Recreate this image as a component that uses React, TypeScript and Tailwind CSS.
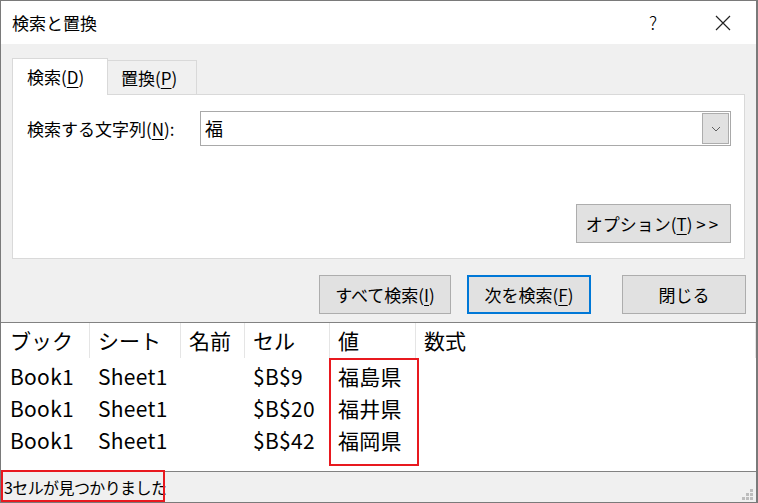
import React from "react";

const font = { fontFamily: '"Noto Sans CJK JP", "Noto Sans", sans-serif' };

function U({ children }: { children: React.ReactNode }) {
  return <span className="underline underline-offset-[3px] decoration-1">{children}</span>;
}

function Chevron() {
  return (
    <svg width="10" height="6" viewBox="0 0 10 6" fill="none">
      <path d="M1 1l4 4 4-4" stroke="#606060" strokeWidth="1" />
    </svg>
  );
}

function Grip() {
  return (
    <svg width="12" height="12" viewBox="0 0 12 12" fill="#bdbdbd">
      <rect x="8" y="0" width="3" height="3" />
      <rect x="4" y="4" width="3" height="3" />
      <rect x="8" y="4" width="3" height="3" />
      <rect x="0" y="8" width="3" height="3" />
      <rect x="4" y="8" width="3" height="3" />
      <rect x="8" y="8" width="3" height="3" />
    </svg>
  );
}

const cols = [
  { title: "ブック", w: "w-[88px]" },
  { title: "シート", w: "w-[91px]" },
  { title: "名前", w: "w-[64px]" },
  { title: "セル", w: "w-[85px]" },
  { title: "値", w: "w-[86px]" },
  { title: "数式", w: "flex-1" },
];

const rows = [
  ["Book1", "Sheet1", "", "$B$9", "福島県", ""],
  ["Book1", "Sheet1", "", "$B$20", "福井県", ""],
  ["Book1", "Sheet1", "", "$B$42", "福岡県", ""],
];

export default function App() {
  return (
    <div
      style={font}
      className="w-[758px] h-[503px] flex flex-col border-l border-r-2 border-t border-b border-[#7a7a7a] text-black overflow-hidden relative"
    >
      {/* title bar */}
      <div className="h-[43px] bg-white flex items-center shrink-0">
        <span className="pl-[11px] text-[17px] flex-1">検索と置換</span>
        <span className="w-[46px] text-center text-[18px] font-light">?</span>
        <span className="w-[24px]" />
        <span className="w-[46px] flex justify-center">
          <svg width="16" height="16" viewBox="0 0 16 16">
            <path d="M1 1l14 14M15 1L1 15" stroke="#222" strokeWidth="1.2" />
          </svg>
        </span>
        <span className="w-[10px]" />
      </div>

      {/* body */}
      <div className="bg-[#f0f0f0] flex flex-col px-[11px] pt-[13px] shrink-0">
        <div className="flex items-end h-[37px]">
          <div className="w-[96px] h-[37px] bg-white border border-b-0 border-[#d9d9d9] flex items-center pl-[14px] text-[17px] relative top-[1px]">
            検索(<U>D</U>)
          </div>
          <div className="w-[89px] h-[34px] bg-[#f0f0f0] border border-l-0 border-b-0 border-[#d9d9d9] flex items-center pl-[13px] text-[17px]">
            置換(<U>P</U>)
          </div>
        </div>
        <div className="h-[165px] bg-white border border-[#d9d9d9] flex flex-col pl-[14px] pr-[13px] pt-[16px] pb-[15px]">
          <div className="flex items-center">
            <span className="w-[173px] text-[17px]">
              検索する文字列(<U>N</U>):
            </span>
            <div className="flex-1 h-[35px] border border-[#a9a9a9] flex items-center pl-[4px] pr-[1px]">
              <span className="flex-1 text-[18px]">福</span>
              <span className="w-[27px] h-[31px] bg-[#e1e1e1] border border-[#adadad] flex items-center justify-center">
                <Chevron />
              </span>
            </div>
          </div>
          <div className="flex-1" />
          <div className="flex justify-end">
            <button className="w-[155px] h-[39px] bg-[#e1e1e1] border border-[#adadad] text-[17px]">
              オプション(<U>T</U>) <span className="tracking-[3px]">&gt;&gt;</span>
            </button>
          </div>
        </div>

        <div className="flex justify-end items-center pt-[16px] pb-[8px]">
          <button className="w-[132px] h-[39px] bg-[#e1e1e1] border border-[#adadad] text-[17px]">
            すべて検索(<U>I</U>)
          </button>
          <button className="w-[124px] h-[39px] ml-[16px] bg-[#e1e1e1] border-2 border-[#0078d7] text-[17px]">
            次を検索(<U>F</U>)
          </button>
          <button className="w-[124px] h-[39px] ml-[31px] mr-[-1px] bg-[#e1e1e1] border border-[#adadad] text-[17px]">
            閉じる
          </button>
        </div>
      </div>

      {/* result list */}
      <div className="flex-1 bg-white border-t border-[#828282] flex flex-col pl-[1px]">
        <div className="flex h-[35px]">
          {cols.map((c) => (
            <div
              key={c.title}
              className={`${c.w} border-r border-[#e5e5e5] flex items-center pl-[8px] text-[21px] leading-none`}
            >
              {c.title}
            </div>
          ))}
        </div>
        <div className="flex flex-col pt-[2px]">
          {rows.map((r, i) => (
            <div key={i} className="flex h-[32px] items-center">
              {r.map((v, j) => (
                <div key={j} className={`${cols[j].w} pl-[8px] text-[21px] leading-none tracking-[0.3px]`}>
                  {v}
                </div>
              ))}
            </div>
          ))}
        </div>
        {/* annotation box */}
        <div className="absolute left-[328px] top-[357px] w-[90px] h-[108px] border-2 border-[#e8191f]" />
      </div>

      {/* status bar */}
      <div className="h-[31px] bg-[#f0f0f0] border-t border-[#828282] flex items-center justify-between shrink-0">
        <span className="pl-[3px] text-[16px] tracking-[-0.6px]">3セルが見つかりました</span>
        <span className="pr-[2px] self-end pb-[1px]">
          <Grip />
        </span>
        <div className="absolute left-0 bottom-0 w-[164px] h-[32px] border-2 border-[#e8191f]" />
      </div>
    </div>
  );
}
